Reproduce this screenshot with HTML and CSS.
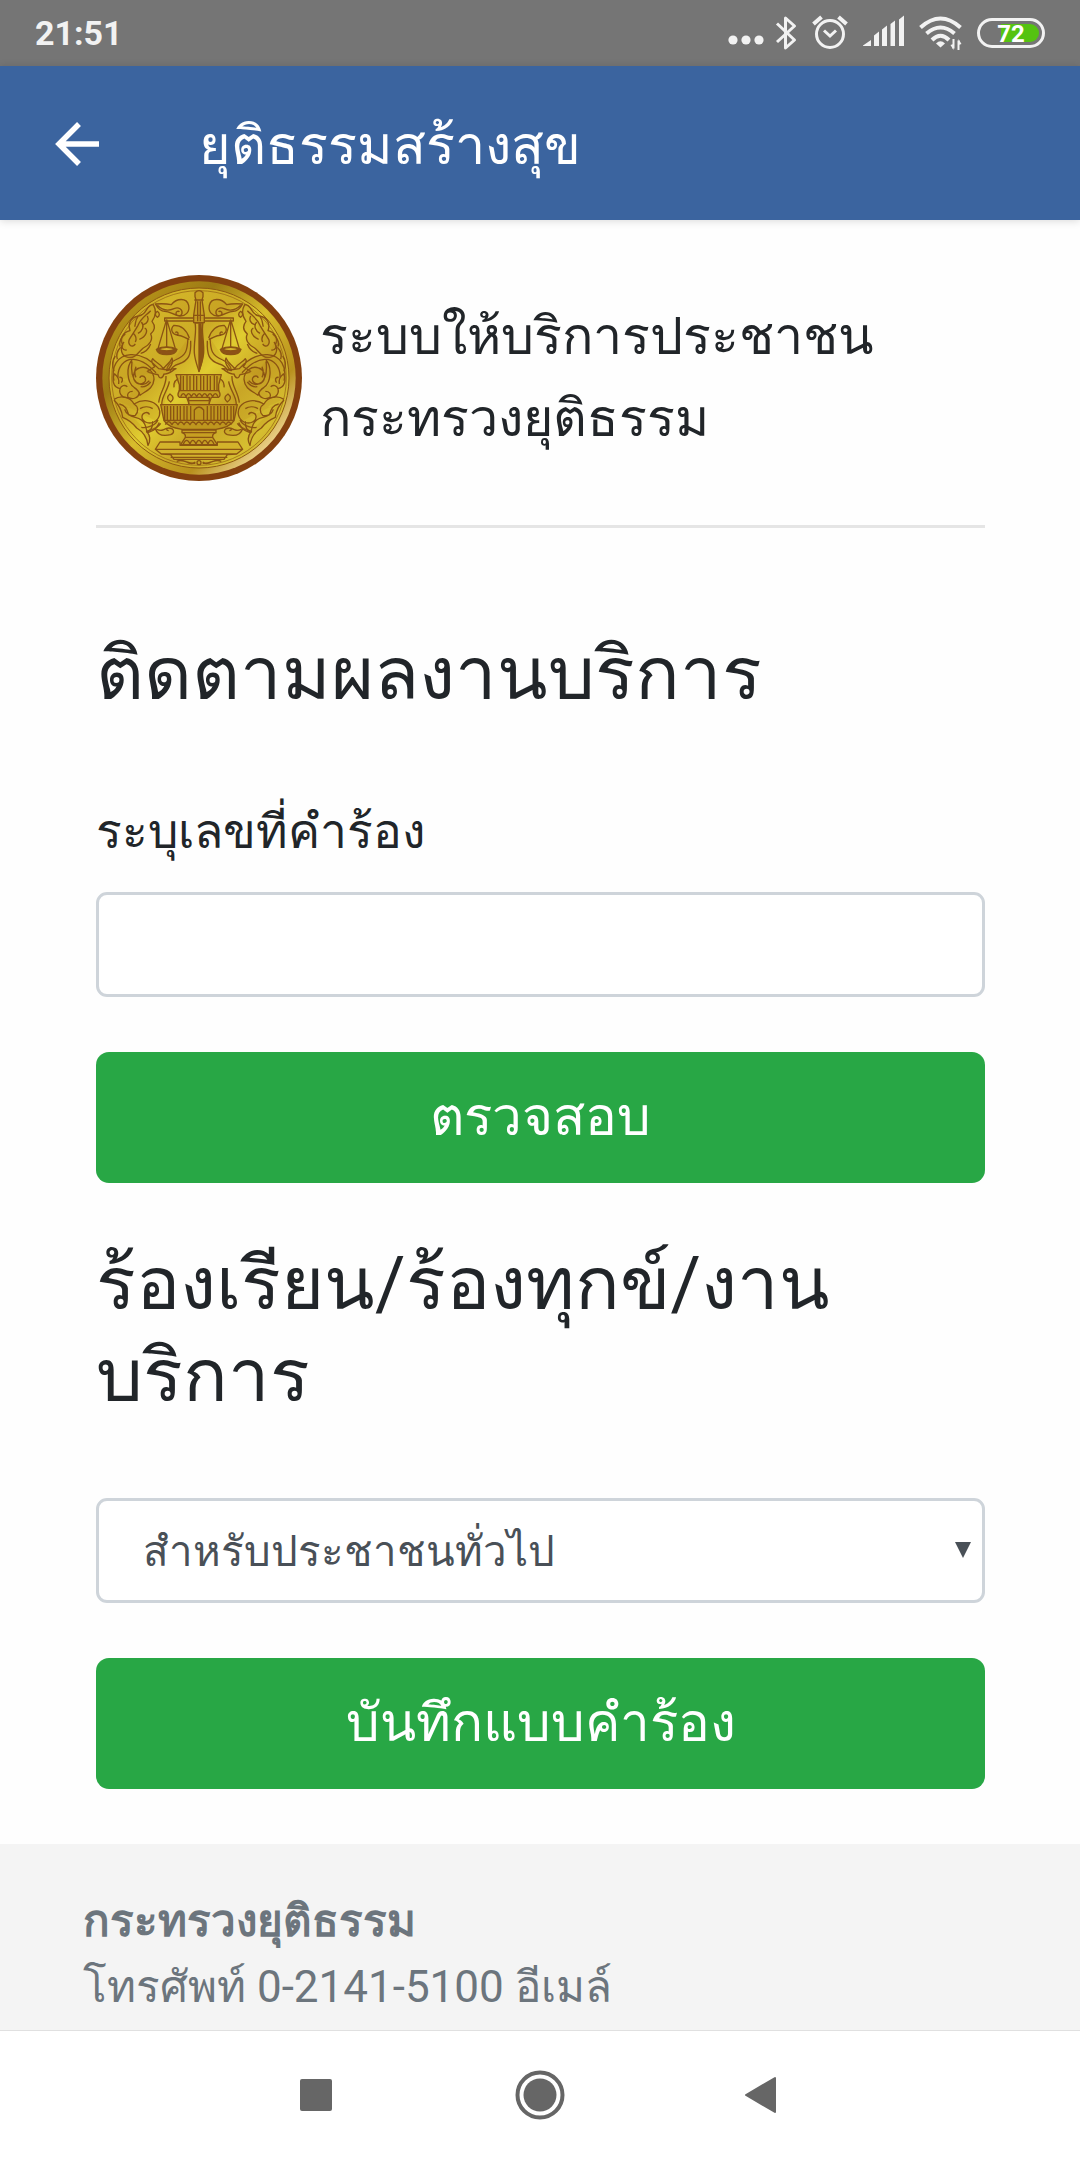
FILE: index.html
```html
<!DOCTYPE html>
<html lang="th">
<head>
<meta charset="utf-8">
<meta name="viewport" content="width=device-width, initial-scale=1">
<title>ยุติธรรมสร้างสุข</title>
<link rel="stylesheet" href="styles.css">
</head>
<body>
<div class="status-bar">
  <span class="clock">21:51</span>
  <div class="status-icons">
    <svg width="36" height="36" viewBox="0 0 36 36" fill="#f2f2f2" aria-hidden="true"><circle cx="5" cy="25" r="4.600"/><circle cx="18" cy="25" r="4.600"/><circle cx="31" cy="25" r="4.600"/></svg>
    <svg class="bluetooth" width="22" height="36" viewBox="0 0 22 36" fill="none" stroke="#f2f2f2" stroke-width="3" stroke-linejoin="round" aria-hidden="true"><path d="M2 8.500 19.500 25 10.500 33V3L19.500 11 2 27"/></svg>
    <svg class="alarm" width="36" height="36" viewBox="0 0 36 36" fill="none" stroke="#f2f2f2" stroke-width="3" aria-hidden="true"><circle cx="18" cy="19" r="13.500"/><path d="M12 15.500 18 21l6-5.500"/><path d="M1.500 9 9.500 2M26.500 2l8 7" stroke-width="4"/></svg>
    <svg class="signal" width="42" height="36" viewBox="0 0 42 36" fill="#f2f2f2" aria-hidden="true"><path d="M0 30.500 8 25v6H0zM11 20.500l5-4V31h-5zM19 14.500l5-4V31h-5zM27.500 9l4.500-3.500V31h-4.500zM36 4.500l5-4V31h-5z"/></svg>
    <svg class="wifi" width="44" height="36" viewBox="0 0 44 36" fill="none" stroke="#f2f2f2" stroke-width="4" aria-hidden="true"><path d="M1.500 12.500Q21.500-5.500 41.500 12.500M7.500 18.500Q21.500 6.500 35.500 18.500M13 25Q21.500 16.500 30 25"/><path d="M21.500 32.500 17 28.500q4.500-4.500 9 0z" fill="#f2f2f2" stroke="none"/><path d="M34.500 24v9.500M39.500 35v-9.500" stroke-width="2"/><path d="M31.500 30v0l3 5V29zM42.500 29l-3-5v6z" fill="#f2f2f2" stroke="none"/></svg>
    <div class="battery"><span>72</span></div>
  </div>
</div>

<header class="app-bar">
  <button class="back" type="button" aria-label="ย้อนกลับ">
    <svg width="44" height="44" viewBox="0 0 44 44" fill="none" stroke="#fff" stroke-width="5.500" aria-hidden="true"><path d="M44 22H4M24 2 4 22l20 20"/></svg>
  </button>
  <div class="app-title">ยุติธรรมสร้างสุข</div>
</header>

<main class="content">
  <div class="brand">
    <svg class="seal" viewBox="50 43 618 618" role="img" aria-label="ตรากระทรวงยุติธรรม">
      <defs>
        <linearGradient id="gold" x1="0" y1="0" x2="1" y2="1">
          <stop offset="0" stop-color="#c49f22"/><stop offset=".2" stop-color="#d2b428"/><stop offset=".38" stop-color="#ccab26"/><stop offset=".5" stop-color="#e0cc30"/><stop offset=".65" stop-color="#c9a626"/><stop offset=".82" stop-color="#d6be30"/><stop offset="1" stop-color="#bd9728"/>
        </linearGradient>
        <linearGradient id="rim" x1="0" y1="0" x2="1" y2="1">
          <stop offset="0" stop-color="#c9a51d"/><stop offset=".3" stop-color="#9c7a14"/><stop offset=".5" stop-color="#d8bd2c"/><stop offset=".72" stop-color="#b8901d"/><stop offset=".86" stop-color="#ecd28a"/><stop offset="1" stop-color="#c49c22"/>
        </linearGradient>
        <g id="scroll">
          <path d="M222 132c-24 0-16 30-44 34s-32 28-26 44c-20 4-32 24-22 42-8 14-4 34 16 38 24 4 32-18 46-28 20-10 30-26 22-42 16-14 12-28 4-38 12-16 14-32 4-50z"/>
          <path d="M214 150c-18 18-30 24-38 44-10 18-18 28-26 42-6 16 8 28 18 14M186 184c10 12 4 26-10 34M162 218c8 8 10 18 6 26M204 166c6 12 0 22-12 26M196 202c12 6 4 26-16 34M134 244c-12 14-4 26 8 24"/>
          <path d="M234 134c14 14 32 18 50 10 14-6 26 2 24 14-2 10-18 10-18 0 0-6 8-8 10-4M228 130c24-2 30-2 48 2 16-20 46-22 52 2 4 20-10 34-28 32-20-4-28-14-44-14-12 0-20-8-28-22z"/>
          <path d="M330 232c-8-24-22-38-46-38-14 12-4 30 12 28 2-8-6-10-8-6M330 236c-16-4-22-14-38-12M326 232c-2 40-6 52-38 66-18 8-24 18-26 30M334 240c2 44-6 60-36 70-14 4-22 12-26 22"/>
          <path d="M104 360c-10-40 10-76 50-78 34-2 62 18 84 42l28 4M116 350c-2-30 18-56 46-54 30 2 50 22 68 40M226 318c-8-10-12-18-6-24 8 12 20 12 32 30 8-12 20-16 26-32 6 14-6 30-16 38 10-2 18-8 28-6-12 6-22 18-36 16-4 14-14 16-18 2-10-2-22-4-32-10 8-6 14-8 22-14z"/>
          <path d="M158 298c-18 20-16 66 6 82 12 8 16 14 18 24 14-12 40-18 42-48 0-26-24-42-44-34-20 6-24 36-6 46 14 6 28-4 24-16-4-8-16-8-16 0M158 302c-4 30 0 50 14 64 14 8 24 8 38-6M170 318c-4 10-4 24 0 32M184 378c12 2 22-4 30-14"/>
          <path d="M106 338c-10 20-4 42 16 46-4 16 8 30 24 26 14 8 32 2 34-14M106 340c8 6 14 18 12 30M122 384c4-10 14-12 22-6M108 286c-10 14-10 30-4 46M146 410c-4-10 2-18 14-18M124 260c-14 14-14 24-10 36"/>
          <path d="M104 416c24-16 50-4 60 14 26-16 58-12 72 8 10 16 6 36-12 46-18 8-38-2-36-18 2-12 20-14 22-4M104 418c16 16 24 34 26 52 20 8 30 16 42 32 14 8 30 20 34 52 8-14 6-30-4-42 16-4 34-10 42-24M164 430c14 8 14 24 4 34-14 4-28-4-32-18M120 430c18 4 22 14 28 32 14 10 26 6 38 16 10 8 14 18 16 32M182 444c10-6 26-8 38 0M186 500c20 4 44-8 50-22"/>
          <path d="M220 482c0 20-4 28-20 32M240 486c-8 16-10 22-34 30M270 362c-2 16-14 34-20 52-4 14-4 26 0 38M260 346c2 30-18 46-22 80M272 400c-10 8-10 16 2 24 10-8 10-16-2-24zM234 152c-8 6-8 12 0 18 8-4 8-12 0-18zM228 504c6 18 22 24 46 18 14-6 10-20-6-20-8 0-8 8 0 8M232 506c14 6 20 2 32-4M308 350c-18 4-26 16-24 30M120 350c10-2 12 8 6 16M292 602c20-10 28 8 56 6M318 602c12 10 24 8 30 2"/>
          <path d="M138 220c-12 8-20 24-16 38M176 168c-10 12-6 20-10 30M214 250c-6 16-14 24-30 28"/>
        </g>
      </defs>
      <circle cx="359" cy="352" r="309" fill="#84400f"/>
      <circle cx="359" cy="352" r="290" fill="url(#rim)"/>
      <circle cx="359" cy="352" r="270" fill="url(#gold)" stroke="#8f5a12" stroke-width="3"/>
      <circle cx="359" cy="352" r="262" fill="none" stroke="#8f5a12" stroke-width="2"/>
      <g fill="#b88618" fill-opacity=".2" stroke="#8b5413" stroke-width="4" stroke-linejoin="round">
        <use href="#scroll"/>
        <use href="#scroll" transform="translate(718 0) scale(-1 1)"/>
        <path d="M262 176v84M262 176l-26 88M262 176l26 88M454 176v84M454 176l-26 88M454 176l26 88" fill="none"/>
        <path d="M256 172h206v9H256z" fill="#d2ae28"/>
        <path d="M347 108V96q12-12 24 0v12l-3 10 7 46v22h-32v-22l7-46zM345 118h28M355 122v60M363 122v60M343 164h32" fill="#c79e22" fill-opacity=".9"/>
        <path d="M347 187h24c-6 20 4 56 2 90-2 22-8 36-14 56-6-20-12-34-14-56-2-34 8-70 2-90z" fill="#d1ae2b" fill-opacity="1"/>
        <path d="M359 190v142c6-20 14-38 12-66 0-30-6-54-6-76z" fill="#8b5413" fill-opacity="1"/>
        <path d="M231 266q31-14 62 0-4 16-31 16t-31-16zM423 266q31-14 62 0-4 16-31 16t-31-16z" fill="#8d5217" fill-opacity="1"/>
        <path d="M235 265q27-10 54 0-27 11-54 0zM427 265q27-10 54 0-27 11-54 0z" fill="#d7b72f" fill-opacity="1"/>
        <path d="M290 342h136q-4 16-8 30v18q8 14 0 20h-22l-8 22h-58l-8-22h-22q-8-6 0-20v-18z" fill="#c39e20" fill-opacity=".9"/>
        <path d="M304 344v46M312 346v42M323 344v46M332 346v42M343 344v46M352 346v42M364 344v46M373 346v42M384 344v46M393 346v42M405 344v46M413 346v42M298 390h122M304 408q8-18 16 0 8-18 16 0 8-18 16 0 8-18 16 0 8-18 16 0 8-18 16 0 8-18 16 0" fill="none"/>
        <path d="M328 410h62v22h-62zM328 420h62" fill="#d6b92c"/>
        <path d="M244 432h230q-6 30-10 48-12 20-54 26H308q-42-6-54-26-4-18-10-48z" fill="#bd951e" fill-opacity=".9"/>
        <path d="M256 436v42M264 436v42M274 436v42M283 436v42M294 436v42M303 436v42M314 436v42M323 436v42M334 436v42M345 478v-30q14-18 28 0v30M384 436v42M395 436v42M404 436v42M415 436v42M424 436v42M435 436v42M444 436v42M455 436v42M463 436v42M253 479h212M258 492q10-18 20 0 8-16 18 0 8-16 18 0 8-16 18 0 8-16 18 0 8-16 18 0 8-16 18 0 8-16 18 0 8-16 18 0 8-16 18 0 8-16 16 0" fill="none"/>
        <path d="M308 508h102v8q-12 4-10 14l14 22H304l14-22q2-10-10-14zM308 516h102M318 530h82M312 550q10-22 20 0 8-22 18 0 8-22 18 0 8-22 18 0 8-22 18 0" fill="#c79f22" fill-opacity=".9"/>
        <path d="M242 544h60v10h112v-10h62l14 22-18 14-28 2-10 14H284l-10-14-28-2-18-14zM230 566h258M246 580h226M274 590h170" fill="#d3b22b" fill-opacity=".9"/>
        <circle cx="359" cy="606" r="6"/>
      </g>
    </svg>
    <p class="brand-name">ระบบให้บริการประชาชน<br>กระทรวงยุติธรรม</p>
  </div>
  <hr class="divider">

  <form class="section">
    <h2>ติดตามผลงานบริการ</h2>
    <label for="request-no">ระบุเลขที่คำร้อง</label>
    <input class="field" id="request-no" type="text">
    <button class="submit" type="button">ตรวจสอบ</button>
  </form>

  <form class="section complaint">
    <h2>ร้องเรียน/ร้องทุกข์/งานบริการ</h2>
    <div class="select-wrap">
      <select class="field" aria-label="ประเภทผู้ใช้บริการ"><option>สำหรับประชาชนทั่วไป</option></select>
      <svg class="caret" width="16" height="16" viewBox="0 0 16 16" fill="#495057" aria-hidden="true"><path d="M0 0h16L8 16z"/></svg>
    </div>
    <button class="submit" type="button">บันทึกแบบคำร้อง</button>
  </form>
</main>

<footer class="footer">
  <strong>กระทรวงยุติธรรม</strong>
  <span>โทรศัพท์ 0-2141-5100 อีเมล์</span>
</footer>

<nav class="nav-bar">
  <button type="button" aria-label="แอปล่าสุด"><svg width="50" height="50" viewBox="0 0 50 50" fill="#666" aria-hidden="true"><rect x="9" y="9" width="32" height="32" rx="2"/></svg></button>
  <button type="button" aria-label="หน้าหลัก"><svg width="50" height="50" viewBox="0 0 50 50" fill="#666" aria-hidden="true"><circle cx="25" cy="25" r="22.500" fill="none" stroke="#666" stroke-width="4"/><circle cx="25" cy="25" r="16.500"/></svg></button>
  <button type="button" aria-label="กลับ"><svg width="50" height="50" viewBox="0 0 50 50" fill="#666" stroke="#666" stroke-width="2" stroke-linejoin="round" aria-hidden="true"><path d="M7 25 36 8v34z"/></svg></button>
</nav>
</body>
</html>
```
FILE: styles.css
```css
* {
  box-sizing: border-box;
}

body {
  margin: 0;
  min-height: 100vh;
  display: flex;
  flex-direction: column;
  background: #fefefe;
  color: #212529;
  font-family: Roboto, sans-serif;
  font-size: 44px;
}

button,
input,
select {
  font: inherit;
}

button {
  border: 0;
  padding: 0;
  background: none;
}

svg {
  display: block;
}

.status-bar {
  display: flex;
  align-items: center;
  justify-content: space-between;
  height: 66px;
  padding: 0 35px;
  background: #757575;
  color: #f2f2f2;
}

.clock {
  font-size: 34px;
  font-weight: 700;
  line-height: 40px;
}

.status-icons {
  display: flex;
  align-items: center;
}

.bluetooth {
  margin-left: 11px;
}

.alarm {
  margin-left: 15px;
}

.signal {
  margin-left: 15px;
}

.wifi {
  margin-left: 14px;
}

.battery {
  width: 68px;
  height: 30px;
  margin-left: 14px;
  border: 3px solid #f2f2f2;
  border-radius: 15px;
  background: linear-gradient(90deg, #757575 18px, #55c311 18px) content-box;
  padding: 3px;
  color: #fff;
  font-size: 24px;
  font-weight: 700;
  line-height: 20px;
  text-align: center;
}

.app-bar {
  position: relative;
  display: flex;
  align-items: center;
  gap: 100px;
  height: 154px;
  padding: 6px 55px 0;
  background: #3b649f;
  box-shadow: 0 1px 8px rgba(0, 0, 0, 0.15);
  color: #fff;
}

.back {
  padding-bottom: 4px;
}

.app-title {
  font-size: 54px;
  line-height: 80px;
}

.content {
  flex: 1;
  padding: 55px 95px 55px 96px;
}

.brand {
  display: flex;
  align-items: center;
  gap: 18px;
}

.seal {
  width: 206px;
  height: 206px;
}

.brand-name {
  margin: 0;
  font-size: 52px;
  line-height: 82px;
}

.divider {
  height: 3px;
  margin: 44px 0 100px;
  border: 0;
  background: #e5e5e5;
}

.section {
  display: flex;
  flex-direction: column;
}

h2 {
  margin: 0 0 76px;
  font-size: 74px;
  font-weight: 400;
  line-height: 92px;
}

label {
  margin-bottom: 24px;
  font-size: 48px;
  line-height: 72px;
}

.field {
  display: block;
  width: 100%;
  padding: 17px 44px 15px;
  border: 3px solid #ced4da;
  border-radius: 11px;
  appearance: none;
  background: #fff;
  color: #495057;
  font-size: 42px;
  line-height: 67px;
}

.select-wrap {
  position: relative;
}

.caret {
  position: absolute;
  top: 44px;
  right: 14px;
}

.submit {
  margin-top: 55px;
  padding: 24px;
  border-radius: 13px;
  background: #28a745;
  color: #fff;
  font-size: 53px;
  line-height: 83px;
}

.complaint {
  margin-top: 55px;
}

.footer {
  display: flex;
  flex-direction: column;
  padding: 44px 83px 10px;
  background: #f4f4f4;
  color: #6c757d;
  line-height: 66px;
}

.nav-bar {
  display: flex;
  justify-content: center;
  gap: 174px;
  padding: 39px 0 40px;
  border-top: 1px solid #e0e0e0;
  background: #fff;
}
```
